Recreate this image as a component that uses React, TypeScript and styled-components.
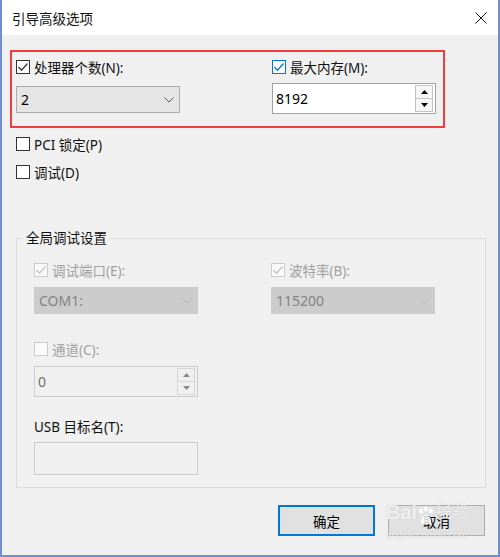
import React from 'react';
import styled, { createGlobalStyle } from 'styled-components';

const GlobalStyle = createGlobalStyle`
  html, body {
    margin: 0;
    padding: 0;
    background: #2b2b2b;
  }
  body {
    font-family: "Noto Sans", "Noto Sans CJK SC", sans-serif;
  }
`;

const Window = styled.div`
  position: relative;
  width: 500px;
  height: 557px;
  box-sizing: border-box;
  display: flex;
  flex-direction: column;
  background: #f0f0f0;
  border-left: 2px solid #6f8fcf;
  border-right: 2px solid #6f8fcf;
  border-bottom: 2px solid #6f8fcf;
  font-size: 13.5px;
  color: #111;
`;

const TitleBar = styled.div`
  height: 35px;
  flex-shrink: 0;
  display: flex;
  align-items: center;
  justify-content: space-between;
  padding: 0 11px 0 10px;
  background: #fff;
  font-size: 13.5px;
`;

const Body = styled.div`
  flex: 1;
  display: flex;
  flex-direction: column;
  padding: 15px 13px 0 14px;
`;

const Highlight = styled.div`
  width: 435px;
  margin-left: -6px;
  box-sizing: border-box;
  border: 2px solid #f23d3d;
  padding: 6px 4px 12px 4px;
  display: grid;
  grid-template-columns: 164px 164px;
  column-gap: 92px;
  align-items: start;
`;

const Field = styled.div<{ $gap: number; $mt?: number }>`
  display: flex;
  flex-direction: column;
  gap: ${p => p.$gap}px;
  margin-top: ${p => p.$mt ?? 0}px;
`;

const Row = styled.label<{ $disabled?: boolean }>`
  height: 18px;
  display: flex;
  align-items: center;
  gap: 4px;
  white-space: nowrap;
  color: ${p => (p.$disabled ? '#a0a0a0' : '#111')};
`;

const Box = styled.span<{ $accent?: boolean; $disabled?: boolean }>`
  width: 14px;
  height: 14px;
  box-sizing: border-box;
  flex-shrink: 0;
  display: flex;
  align-items: center;
  justify-content: center;
  border: 1px solid ${p => (p.$disabled ? '#cccccc' : p.$accent ? '#0078d7' : '#333')};
  background: ${p => (p.$disabled ? '#fafafa' : '#fff')};
  color: ${p => (p.$disabled ? '#c4c4c4' : p.$accent ? '#0078d7' : '#333')};
`;

const Options = styled.div`
  display: flex;
  flex-direction: column;
  gap: 10px;
  margin-top: 7px;
`;

const Group = styled.fieldset`
  width: 470px;
  box-sizing: border-box;
  margin: 48px 0 0 0;
  padding: 0;
  border: 1px solid #dcdcdc;
  min-inline-size: 0;
`;

const Legend = styled.legend`
  margin-left: 6px;
  padding: 0 3px;
  line-height: 18px;
  color: #111;
`;

const GroupInner = styled.div`
  display: flex;
  flex-direction: column;
  padding: 14px 17px 12px 17px;
`;

const Columns = styled.div`
  display: grid;
  grid-template-columns: 164px 164px;
  column-gap: 73px;
`;

const Select = styled.div<{ $disabled?: boolean }>`
  width: 164px;
  height: 27px;
  box-sizing: border-box;
  display: flex;
  align-items: center;
  justify-content: space-between;
  padding: 0 5px 0 4px;
  border: 1px solid ${p => (p.$disabled ? '#cccccc' : '#adadad')};
  background: ${p => (p.$disabled ? '#cccccc' : '#e5e5e5')};
  color: ${p => (p.$disabled ? '#838383' : '#000')};
  font-size: 14px;
`;

const Spin = styled.div<{ $disabled?: boolean }>`
  width: 164px;
  height: 31px;
  box-sizing: border-box;
  display: flex;
  align-items: stretch;
  border: 1px solid ${p => (p.$disabled ? '#cccccc' : '#a3a3a3')};
  background: ${p => (p.$disabled ? '#f0f0f0' : '#fff')};
  color: ${p => (p.$disabled ? '#6d6d6d' : '#000')};
  font-size: 14px;
`;

const SpinValue = styled.div`
  flex: 1;
  display: flex;
  align-items: center;
  padding-left: 3px;
`;

const SpinButtons = styled.div`
  width: 18px;
  margin: 1px 2px 1px 0;
  display: flex;
  flex-direction: column;
`;

const SpinButton = styled.div<{ $disabled?: boolean }>`
  flex: 1;
  display: flex;
  align-items: center;
  justify-content: center;
  border: 1px solid ${p => (p.$disabled ? '#d6d6d6' : '#c4c4c4')};
  background: ${p => (p.$disabled ? '#f0f0f0' : '#f7f7f7')};
  color: ${p => (p.$disabled ? '#8a8a8a' : '#000')};
  & + & {
    border-top: none;
  }
`;

const TextBox = styled.div`
  width: 164px;
  height: 33px;
  box-sizing: border-box;
  border: 1px solid #cccccc;
  background: #f0f0f0;
`;

const Footer = styled.div`
  position: relative;
  display: flex;
  justify-content: flex-end;
  gap: 13px;
  margin-top: 17px;
`;

const Button = styled.button<{ $primary?: boolean }>`
  width: 97px;
  height: 31px;
  box-sizing: border-box;
  margin: 0;
  padding: 0;
  font: inherit;
  font-size: 13.5px;
  color: #000;
  background: #e1e1e1;
  border: ${p => (p.$primary ? '2px solid #0078d7' : '1px solid #adadad')};
`;

const Watermark = styled.div`
  position: absolute;
  right: 12px;
  top: -7px;
  width: 92px;
  display: flex;
  flex-direction: column;
  align-items: center;
  pointer-events: none;
  color: rgba(255, 255, 255, 0.8);
  text-shadow: 0 0 1px rgba(140, 140, 140, 0.5);
  font-family: "Liberation Sans", "Noto Sans CJK SC", sans-serif;
`;

const MarkTitle = styled.div`
  display: flex;
  align-items: flex-end;
  font-size: 21px;
  font-weight: bold;
  line-height: 28px;
  letter-spacing: -0.5px;
`;

const MarkCn = styled.span`
  font-size: 17px;
  font-weight: normal;
  margin-left: 1px;
`;

const MarkUrl = styled.div`
  font-size: 10px;
  line-height: 12px;
  margin-top: 3px;
`;

const Check = () => (
  <svg width="12" height="12" viewBox="0 0 12 12">
    <polyline points="1.5,6 4.5,9.2 10.5,2.5" fill="none" stroke="currentColor" strokeWidth="1.3" />
  </svg>
);

const Chevron = ({ color }: { color: string }) => (
  <svg width="10" height="6" viewBox="0 0 10 6">
    <polyline points="0.5,0.5 5,5 9.5,0.5" fill="none" stroke={color} strokeWidth="1" />
  </svg>
);

const Tri = ({ up }: { up?: boolean }) => (
  <svg width="7" height="4" viewBox="0 0 7 4">
    <polygon points={up ? '0,4 7,4 3.5,0' : '0,0 7,0 3.5,4'} fill="currentColor" />
  </svg>
);

const CheckOption: React.FC<{
  label: string;
  checked?: boolean;
  accent?: boolean;
  disabled?: boolean;
}> = ({ label, checked, accent, disabled }) => (
  <Row $disabled={disabled}>
    <Box $accent={accent} $disabled={disabled}>{checked && <Check />}</Box>
    {label}
  </Row>
);

const SpinInput: React.FC<{ value: string; disabled?: boolean }> = ({ value, disabled }) => (
  <Spin $disabled={disabled}>
    <SpinValue>{value}</SpinValue>
    <SpinButtons>
      <SpinButton $disabled={disabled}><Tri up /></SpinButton>
      <SpinButton $disabled={disabled}><Tri /></SpinButton>
    </SpinButtons>
  </Spin>
);

const App: React.FC = () => {
  return (
    <>
      <GlobalStyle />
      <Window>
        <TitleBar>
          <span>引导高级选项</span>
          <svg width="12" height="12" viewBox="0 0 12 12">
            <path d="M0.5 0.5 L11.5 11.5 M11.5 0.5 L0.5 11.5" stroke="#111" strokeWidth="1" />
          </svg>
        </TitleBar>
        <Body>
          <Highlight>
            <Field $gap={10}>
              <CheckOption label="处理器个数(N):" checked />
              <Select>
                <span>2</span>
                <Chevron color="#555" />
              </Select>
            </Field>
            <Field $gap={7}>
              <CheckOption label="最大内存(M):" checked accent />
              <SpinInput value="8192" />
            </Field>
          </Highlight>

          <Options>
            <CheckOption label="PCI 锁定(P)" />
            <CheckOption label="调试(D)" />
          </Options>

          <Group>
            <Legend>全局调试设置</Legend>
            <GroupInner>
              <Columns>
                <Field $gap={8}>
                  <CheckOption label="调试端口(E):" checked disabled />
                  <Select $disabled>
                    <span>COM1:</span>
                    <Chevron color="#b4b4b4" />
                  </Select>
                </Field>
                <Field $gap={8}>
                  <CheckOption label="波特率(B):" checked disabled />
                  <Select $disabled>
                    <span>115200</span>
                    <Chevron color="#b4b4b4" />
                  </Select>
                </Field>
              </Columns>
              <Field $gap={8} $mt={26}>
                <CheckOption label="通道(C):" disabled />
                <SpinInput value="0" disabled />
              </Field>
              <Field $gap={7} $mt={20}>
                <Row>USB 目标名(T):</Row>
                <TextBox />
              </Field>
            </GroupInner>
          </Group>

          <Footer>
            <Button $primary>确定</Button>
            <Button>取消</Button>
            <Watermark>
              <MarkTitle>
                Bai
                <svg width="18" height="20" viewBox="0 0 22 24">
                  <ellipse cx="5" cy="6" rx="2.6" ry="3.4" fill="currentColor" />
                  <ellipse cx="11" cy="3.5" rx="2.6" ry="3.2" fill="currentColor" />
                  <ellipse cx="17" cy="6" rx="2.6" ry="3.4" fill="currentColor" />
                  <path d="M5 20 C5 13 8 10.5 11 10.5 C14 10.5 17 13 17 20 C17 23 5 23 5 20 Z" fill="currentColor" />
                </svg>
                <MarkCn>经验</MarkCn>
              </MarkTitle>
              <MarkUrl>jingyan.baidu.com</MarkUrl>
            </Watermark>
          </Footer>
        </Body>
      </Window>
    </>
  );
};

export default App;
